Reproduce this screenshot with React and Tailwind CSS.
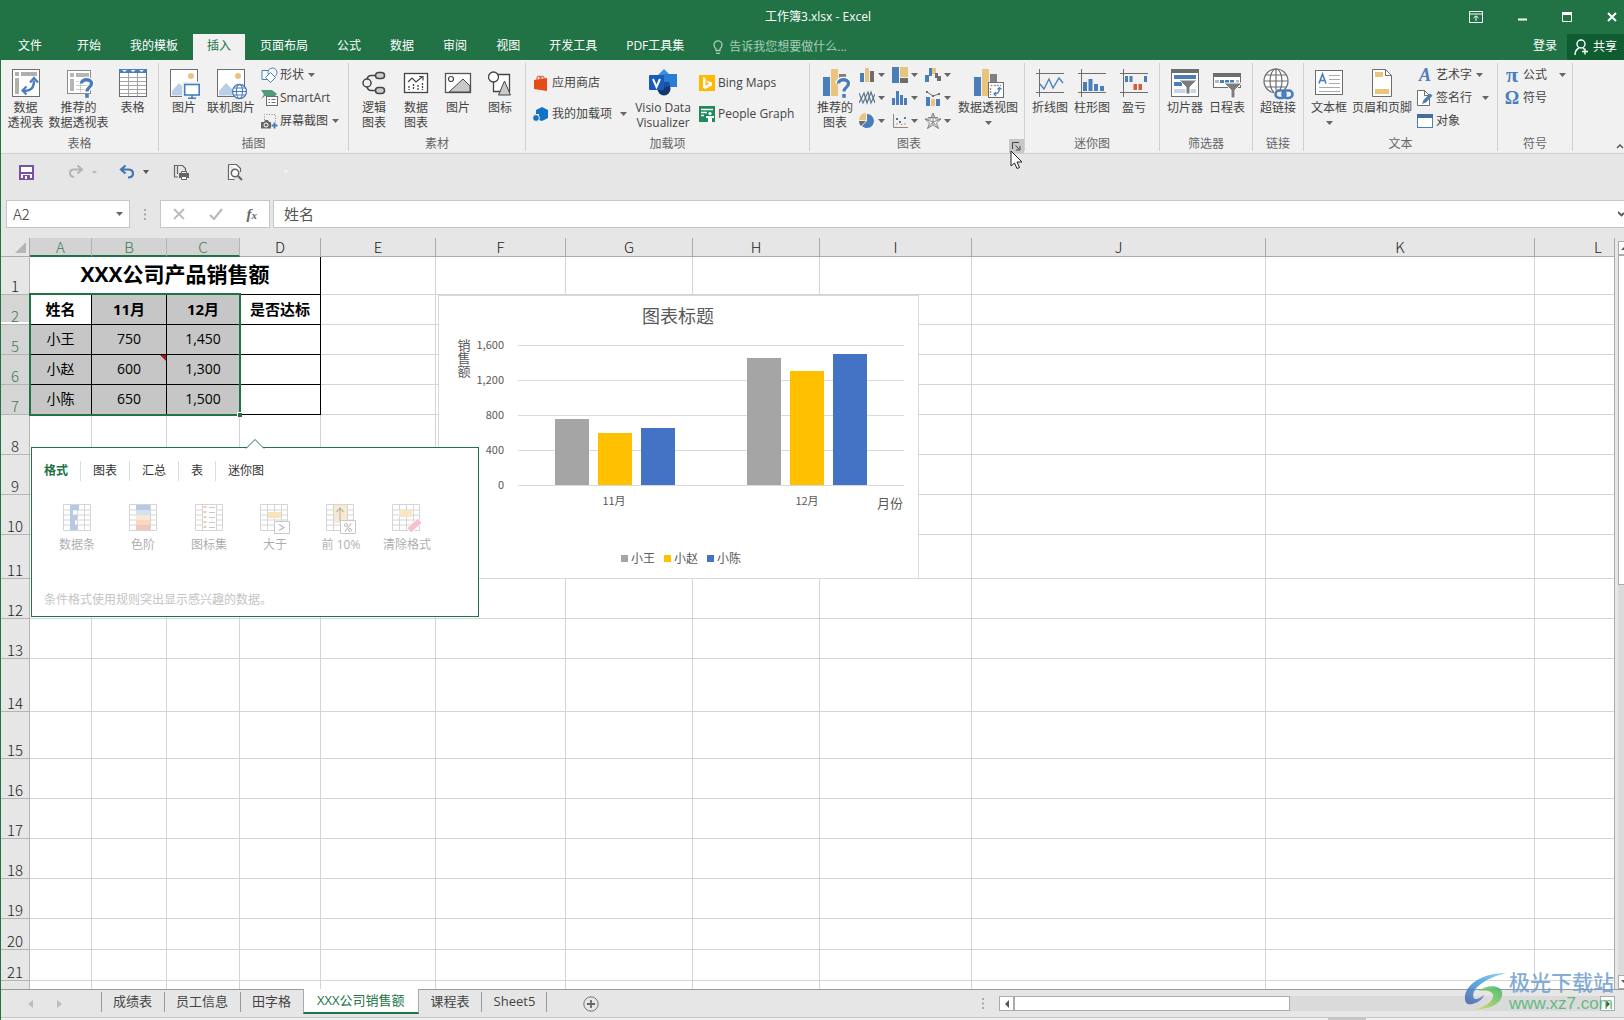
import clsx from 'clsx';

const BLUE = '#4a7ebb';
const GRAY = '#6d6d6d';
const TAN = '#e8c47c';

const TABS = ['文件', '开始', '我的模板', '插入', '页面布局', '公式', '数据', '审阅', '视图', '开发工具', 'PDF工具集'];

const COLS = [
  { id: 'A', w: 'w-[62px]' },
  { id: 'B', w: 'w-[75px]' },
  { id: 'C', w: 'w-[73px]' },
  { id: 'D', w: 'w-[81px]' },
  { id: 'E', w: 'w-[115px]' },
  { id: 'F', w: 'w-[130px]' },
  { id: 'G', w: 'w-[127px]' },
  { id: 'H', w: 'w-[127px]' },
  { id: 'I', w: 'w-[152px]' },
  { id: 'J', w: 'w-[294px]' },
  { id: 'K', w: 'w-[269px]' },
  { id: 'L', w: '' },
];

const ROWS = [
  { id: 1, h: 'h-[38px]', title: 'XXX公司产品销售额' },
  { id: 2, h: 'h-[30px]', cells: ['姓名', '11月', '12月', '是否达标'], head: true },
  { id: 5, h: 'h-[30px]', cells: ['小王', '750', '1,450', ''] },
  { id: 6, h: 'h-[30px]', cells: ['小赵', '600', '1,300', ''], note: 1 },
  { id: 7, h: 'h-[30px]', cells: ['小陈', '650', '1,500', ''] },
  { id: 8, h: 'h-10' },
  { id: 9, h: 'h-10' },
  { id: 10, h: 'h-10' },
  { id: 11, h: 'h-11' },
  { id: 12, h: 'h-10' },
  { id: 13, h: 'h-10' },
  { id: 14, h: 'h-[53px]' },
  { id: 15, h: 'h-[47px]' },
  { id: 16, h: 'h-10' },
  { id: 17, h: 'h-10' },
  { id: 18, h: 'h-10' },
  { id: 19, h: 'h-10' },
  { id: 20, h: 'h-[31px]' },
  { id: 21, h: 'h-[31px]' },
  { id: '', h: 'h-10' },
];

const SHEETS = ['成绩表', '员工信息', '田字格', 'XXX公司销售额', '课程表', 'Sheet5'];

/* ---------- icons ---------- */

function Svg({ w = 32, h = w, className, children }) {
  return (
    <svg width={w} height={h} viewBox={`0 0 ${w} ${h}`} fill="none" className={clsx('shrink-0', className)} aria-hidden="true">
      {children}
    </svg>
  );
}

const Caret = ({ className }) => (
  <Svg w={7} h={4} className={className}><path d="M0 0h7L3.500 4z" fill="#666" /></Svg>
);

const PivotIcon = () => (
  <Svg>
    <rect x="2.500" y="1.500" width="27" height="27" fill="#fff" stroke={GRAY} />
    <path d="M5 4h4v4H5zM11 4h16v4H11zM5 10h4v16H5z" fill="#b0b0b0" />
    <path d="M14 22.500c6 1 10-2 10-10" stroke={BLUE} strokeWidth="2.500" />
    <path d="M20 14.500l4-4.500 4 4.500M16.500 18.500l-4 4 4 4" stroke={BLUE} strokeWidth="2.200" />
  </Svg>
);

const Question = ({ x = 0, y = 0 }) => (
  <g transform={`translate(${x} ${y})`}>
    <path d="M1.500 5.500c0-5 10-5 10 0 0 4-4.500 3.500-4.500 8" stroke="#fff" strokeWidth="6" />
    <path d="M1.500 5.500c0-5 10-5 10 0 0 4-4.500 3.500-4.500 8" stroke={BLUE} strokeWidth="3.400" />
    <rect x="5.200" y="16" width="3.600" height="3.800" fill={BLUE} />
  </g>
);

const RecPivotIcon = () => (
  <Svg>
    <rect x="4.500" y="2.500" width="23" height="23" fill="#fff" stroke="#8a8a8a" />
    <path d="M7 5h4v4H7zM13 5h13v4H13zM7 11h4v12H7z" fill="#b5b5b5" />
    <path d="M13 13.500h12M13 17.500h12M13 21.500h12M17.500 11v13" stroke="#c9c9c9" />
    <Question x={17} y={10} />
  </Svg>
);

const TableIcon = () => (
  <Svg>
    <rect x="2.500" y="1.500" width="27" height="27" fill="#fff" stroke={GRAY} />
    <path d="M2 1h28v4H2z" fill={BLUE} />
    <path d="M5 2h5L7.500 4zM13.500 2h5L16 4zM22 2h5l-2.500 2z" fill="#fff" />
    <path d="M11.500 5v23M20.500 5v23M3 9.500h26M3 13.500h26M3 17.500h26M3 21.500h26M3 25.500h26" stroke="#a3a3a3" />
  </Svg>
);

const Photo = () => (
  <>
    <rect x="2.500" y="1.500" width="27" height="27" fill="#fff" stroke={GRAY} />
    <circle cx="23" cy="8" r="3" fill="#f0bf81" />
    <path d="M4 27.500V23l7-8 9 9v3.500z" fill="#b9cfe8" />
  </>
);

const PictureIcon = () => (
  <Svg>
    <Photo />
    <rect x="16" y="15.500" width="15" height="11.500" fill="#fff" stroke="#f1f1f1" strokeWidth="4" />
    <rect x="16.700" y="16.500" width="14.500" height="10.500" fill="#fff" stroke={BLUE} strokeWidth="1.600" />
    <path d="M24 27v3M20 30.200h8" stroke={BLUE} strokeWidth="1.600" />
  </Svg>
);

const OnlinePictureIcon = () => (
  <Svg>
    <Photo />
    <circle cx="24.500" cy="23.500" r="7" fill="#fff" stroke={BLUE} strokeWidth="1.300" />
    <ellipse cx="24.500" cy="23.500" rx="3" ry="7" stroke={BLUE} strokeWidth="1.200" />
    <path d="M17.500 23.500h14M18.500 20h12M18.500 27h12" stroke={BLUE} strokeWidth="1.200" />
  </Svg>
);

const ShapesIcon = () => (
  <Svg w={17} h={16}>
    <path d="M1 3.500h8v9H1z" fill="#fff" stroke={BLUE} />
    <circle cx="11.500" cy="5.500" r="4.500" fill="#f5f9ff" stroke={BLUE} />
    <path d="M9.500 5.500l5 5-5 5-5-5z" fill="#fff" stroke={BLUE} />
  </Svg>
);

const SmartArtIcon = () => (
  <Svg w={17} h={16}>
    <path d="M0 0h11l5 4-2 2H4L0 9l3-4.500z" fill="#4f9a78" />
    <rect x="5.500" y="6.500" width="11" height="9" fill="#fff" stroke={GRAY} />
    <path d="M7.500 9.500h1.500M7.500 12.500h1.500M10.500 9.500h4M10.500 12.500h4" stroke={GRAY} />
  </Svg>
);

const ScreenshotIcon = () => (
  <Svg w={17} h={16}>
    <path d="M3.500 7V1.500h11V9" stroke="#8a8a8a" strokeDasharray="1 1.500" />
    <path d="M0 9h3l1-2h3l1 2h2v6.500H0z" fill="#666" />
    <circle cx="5" cy="12" r="2" fill="#666" stroke="#fff" />
    <path d="M13.500 9.500v6M10.500 12.500h6" stroke={BLUE} strokeWidth="2" />
  </Svg>
);

const LogicIcon = () => (
  <Svg>
    <circle cx="9" cy="15" r="4" stroke="#444" strokeWidth="1.500" />
    <rect x="17.500" y="4.500" width="9" height="6" rx="3" fill="#ccc" stroke="#444" strokeWidth="1.500" />
    <rect x="17.500" y="19.500" width="9" height="6" rx="3" fill="#ccc" stroke="#444" strokeWidth="1.500" />
    <path d="M17 7.500h-4q-3 0-4 3.500M17 22.500h-4q-3 0-4-3.500" stroke="#444" strokeWidth="1.500" />
  </Svg>
);

const DataChartIcon = () => (
  <Svg>
    <rect x="4.500" y="5.500" width="23" height="19" fill="#fff" stroke="#444" strokeWidth="1.300" />
    <path d="M8 14l4-4 4 4 6-5M19 8.500h4v4" stroke="#444" strokeWidth="1.200" />
    <path d="M9 18v4M13.500 16v6M18 17v5M22.500 15v7" stroke="#444" strokeWidth="1.300" strokeDasharray="2 1" />
  </Svg>
);

const SceneIcon = () => (
  <Svg>
    <rect x="3.500" y="5.500" width="25" height="19" fill="#fff" stroke="#555" strokeWidth="1.300" />
    <circle cx="9" cy="11" r="2.500" stroke="#444" strokeWidth="1.200" />
    <path d="M7 24l14-13 7 7v6z" fill="#c9c9c9" stroke="#444" />
  </Svg>
);

const GlyphIcon = () => (
  <Svg>
    <path d="M9.500 6.500h16v17h-16z" fill="#fff" stroke="#444" strokeWidth="1.300" />
    <circle cx="9.500" cy="9" r="5" fill="#fff" stroke="#444" strokeWidth="1.300" />
    <path d="M20.500 13l6 14h-12z" fill="#c9c9c9" stroke="#444" />
  </Svg>
);

const StoreIcon = () => (
  <Svg w={16}>
    <path d="M1 5l13-2v13L1 14z" fill="#e64a19" />
    <path d="M4 6V2q2-2 4 0v3M7 5V2q2.500-2 4 0v3" stroke="#e64a19" />
  </Svg>
);

const AddinIcon = () => (
  <Svg w={16}>
    <path d="M3 4l6-3 6 3v8l-6 3-3-1V8H3z" fill="#1173c7" />
    <circle cx="3" cy="12" r="3.400" fill="#1173c7" stroke="#f1f1f1" />
  </Svg>
);

const VisioIcon = () => (
  <Svg>
    <path d="M17 1l7 7-7 7-7-7z" fill="#3a8ee0" />
    <path d="M16 6h14v13H16z" fill="#2b7cd3" />
    <circle cx="17" cy="21" r="6.500" fill="#15356f" />
    <path d="M16 14h6l1 4-7 2z" fill="#1d4f9f" />
    <rect x="2" y="7" width="15" height="15" rx="1" fill="#185abd" />
    <path d="M6 11l3.500 8L13 11" stroke="#fff" strokeWidth="2" />
  </Svg>
);

const BingIcon = () => (
  <Svg w={16}>
    <path d="M0 0h16v16H0z" fill="#ffb900" />
    <path d="M4 2l2.500 1v7.500L10 8.800 8 7.500 7.200 5.500 13 7.600v3L6.500 14 4 12.500z" fill="#fff" />
  </Svg>
);

const PeopleIcon = () => (
  <Svg w={16}>
    <path d="M0 0h16v16H0z" fill="#1f8a5b" />
    <path d="M2 3.500h12M2 6.500h6M2 9.500h3" stroke="#fff" strokeWidth="1.500" />
    <circle cx="11" cy="7.500" r="1.600" fill="#fff" />
    <path d="M7 10h8v2h-2v4H9v-4H7z" fill="#fff" />
  </Svg>
);

const RecChartIcon = () => (
  <Svg>
    <path d="M4 9h7v19H4z" fill={BLUE} />
    <path d="M12 1h7v27h-7z" fill={TAN} />
    <path d="M20 6h7v5h-7z" fill="#808080" />
    <Question x={18} y={10} />
  </Svg>
);

const PivotChartIcon = () => (
  <Svg>
    <path d="M2 9h7v19H2z" fill={BLUE} />
    <path d="M10 1h7v27h-7z" fill={TAN} />
    <path d="M18 6h7v10h-7z" fill="#808080" />
    <rect x="16.500" y="14.500" width="15" height="15" fill="#fff" stroke={GRAY} />
    <path d="M18.500 17.500h2M22 17.500h7M18.500 20v7" stroke="#999" strokeWidth="1.500" strokeDasharray="2 1" />
    <path d="M22.500 26q5 0 5-6M25.500 21.500l2-2 2 2M24 24l-2 2 2 2" stroke={BLUE} strokeWidth="1.200" />
  </Svg>
);

const CHART_ICONS = [
  ['柱形图', <Svg w={16}><path d="M1 6h4v9H1z" fill={BLUE} /><path d="M6 1h4v14H6z" fill={TAN} /><path d="M11 4h4v11h-4z" fill={GRAY} /></Svg>],
  ['层次结构图', <Svg w={16}><path d="M0 0h7v16H0z" fill={BLUE} /><path d="M8 0h8v10H8z" fill={TAN} /><path d="M8 11h8v5H8z" fill={GRAY} /></Svg>],
  ['瀑布图', <Svg w={16}><path d="M0 8h4v7H0zM4 1h3v8H4z" fill={BLUE} /><path d="M7 1h4v6H7z" fill={TAN} /><path d="M10 6h3v5h-3zM12 9h4v5h-4z" fill={GRAY} /></Svg>],
  ['折线图', <Svg w={16}><path d="M0 3l4 10L9 2l3 11 4-9" stroke={BLUE} strokeWidth="1.200" /><path d="M0 13L5 3l3 10 4-11 4 11" stroke={GRAY} strokeWidth="1.200" /></Svg>],
  ['统计图', <Svg w={16}><path d="M0 8h3v7H0zM4 1h3v14H4zM8 5h3v10H8zM12 8h3v7h-3z" fill={BLUE} /></Svg>],
  ['组合图', <Svg w={16}><path d="M1 7h4v9H1zM11 9h4v7h-4z" fill={BLUE} /><path d="M6 9h4v7H6z" fill={TAN} /><path d="M2 2l6 4 6-2" stroke={GRAY} /><path d="M1 1h2v2H1zM7 5h2v2H7zM13 3h2v2h-2z" fill={GRAY} /></Svg>],
  ['饼图', <Svg w={16}><path d="M8 1a7 7 0 11-5 12l5-5z" fill={BLUE} /><path d="M7 0v7H0a7 7 0 017-7z" fill={TAN} /><path d="M0 8h7l-5 5a7 7 0 01-2-5z" fill={GRAY} /></Svg>],
  ['散点图', <Svg w={16}><path d="M1.500 1v13.500H16" stroke="#888" /><path d="M4 10h2v2H4zM12 10h2v2h-2z" fill={TAN} /><path d="M7 8h2v2H7zM12 4h2v2h-2z" fill={BLUE} /><path d="M4 5h2v2H4zM9 11h1v1H9z" fill={GRAY} /></Svg>],
  ['雷达图', <Svg w={16}><path d="M8 0l2.500 6H16l-4.500 4 2 5.500L8 12l-5.500 3.500 2-5.500L0 6h5.500zM8 0v12M0 6l8 3 8-3M2.500 15.500L8 9l5.500 6.500M3 4.500h10" stroke="#808080" strokeWidth=".9" /></Svg>],
];

const SparkAxes = () => <path d="M5.500 1v28M2 5.500h28M2 24.500h28" stroke={GRAY} />;

const SparkLineIcon = () => (
  <Svg><SparkAxes /><path d="M6 16l4 5 5-10 4 9 6-10 4 5" stroke={BLUE} strokeWidth="1.300" /></Svg>
);
const SparkColumnIcon = () => (
  <Svg><SparkAxes /><path d="M7 14h4v9H7zM12.500 11h4v12h-4zM18 16h4v7h-4zM24 18h4v5h-4z" fill={BLUE} /></Svg>
);
const SparkWinLossIcon = () => (
  <Svg><SparkAxes /><path d="M7 8h3v6H7zM11.500 8h3v6h-3zM26 8h3v6h-3z" fill={BLUE} /><path d="M15.500 16h3.500v6h-3.500zM20.500 16H24v6h-3.500z" fill="#d05f3d" /></Svg>
);

const SlicerIcon = () => (
  <Svg>
    <rect x="2.500" y="1.500" width="27" height="27" fill="#fff" stroke={GRAY} />
    <path d="M2 1h28v4H2z" fill={GRAY} />
    <path d="M5 7h22v4H5z" fill={BLUE} />
    <path d="M5 14h8v4H5z" fill={BLUE} />
    <path d="M5 21h22v4H5z" fill="#c5d5ea" />
    <path d="M10 12h18l-7 7v7h-4v-7z" fill="#7d7d7d" stroke="#fff" />
  </Svg>
);

const TimelineIcon = () => (
  <Svg>
    <rect x="2.500" y="5.500" width="27" height="14" fill="#fff" stroke={GRAY} />
    <path d="M2 5h28v4H2z" fill={GRAY} />
    <path d="M4 12h4v3H4zM25 12h3v3h-3z" fill="#bbb" />
    <path d="M9 12h4v3H9zM14 12h4v3h-4zM19 12h4v3h-4z" fill={BLUE} />
    <path d="M13 15h18l-7 7v8h-4v-8z" fill="#7d7d7d" stroke="#fff" />
  </Svg>
);

const LinkIcon = () => (
  <Svg>
    <g stroke={GRAY} strokeWidth="1.200">
      <circle cx="14" cy="13" r="12" fill="#fff" />
      <ellipse cx="14" cy="13" rx="6" ry="12" />
      <path d="M14 1v24M2 13h24M4 7h20M4 19h20" />
    </g>
    <path d="M12 22h20v10H12z" fill="#f1f1f1" />
    <rect x="13.500" y="22.500" width="10" height="7.500" rx="3.700" stroke={BLUE} strokeWidth="2.600" />
    <rect x="20.500" y="22.500" width="10" height="7.500" rx="3.700" stroke={BLUE} strokeWidth="2.600" />
  </Svg>
);

const TextBoxIcon = () => (
  <Svg>
    <rect x="2.500" y="2.500" width="27" height="24" fill="#fff" stroke={GRAY} />
    <path d="M6 15.500L9.500 6 13 15.500M7.300 12.500h4.500" stroke={BLUE} strokeWidth="1.600" />
    <path d="M16 7.500h11M16 11.500h11M16 15.500h11M6 19.500h21M6 23.500h21" stroke="#aaa" />
  </Svg>
);

const HeaderIcon = () => (
  <Svg>
    <path d="M6.500 1.500h13l6 6v21h-19z" fill="#fff" stroke={GRAY} />
    <path d="M19.500 1.500v6h6" stroke={GRAY} />
    <path d="M9 4h8v5H9zM9 21h14v5H9z" fill={TAN} />
  </Svg>
);

const SignatureIcon = () => (
  <Svg w={16}><path d="M.5.500h7l5 5v10H.5z" fill="#fff" stroke={GRAY} /><path d="M7.500.500v5h5" stroke={GRAY} /><path d="M5 14l1.500-4L13 3.500l2.500 2L9 12.500z" fill={BLUE} /></Svg>
);
const ObjectIcon = () => (
  <Svg w={16}><rect x=".5" y="1.500" width="15" height="13" fill="#fff" stroke={BLUE} /><path d="M0 1h16v4H0z" fill="#3f6f9f" /></Svg>
);

function Letter({ children, className }) {
  return (
    <span aria-hidden="true" className={clsx("font-['Liberation_Serif',serif] leading-4 font-bold text-[#4a7ebb]", className)}>{children}</span>
  );
}

/* ---------- ribbon parts ---------- */

function BigButton({ icon, lines, w, caret }) {
  return (
    <button className={clsx('flex shrink-0 flex-col items-center pt-[5px] leading-[15px]', w)}>
      {icon}
      {lines.map(l => <span key={l} className="whitespace-nowrap">{l}</span>)}
      {caret && <Caret className="mt-1.5" />}
    </button>
  );
}

function SmallButton({ icon, label, caret, h = 'h-[23px]', gap = 'ml-2' }) {
  return (
    <button className={clsx('flex items-center whitespace-nowrap', h)}>
      <span className="mr-[3px] flex w-4 justify-center">{icon}</span>
      {label}
      {caret && <Caret className={gap} />}
    </button>
  );
}

function Group({ label, w, align = 'justify-center', children, launcher }) {
  return (
    <section className={clsx('relative flex shrink-0 flex-col border-r border-[#d0d0d0]', w)}>
      <div className={clsx('flex h-[73px] items-start', align)}>{children}</div>
      <h2 className={clsx('text-center leading-[15px] text-[#666]', launcher && 'pr-4')}>{label}</h2>
      {launcher && (
        <button aria-label="查看所有图表" className="absolute right-0 -bottom-0.5 flex h-3.5 w-[15px] items-center justify-center bg-[#c6c6c6]">
          <Svg w={9}><path d="M.5 7V.5H7M3.500 3.500l4 4M8 4v4H4" stroke="#444" /></Svg>
        </button>
      )}
    </section>
  );
}

function Ribbon() {
  return (
    <div className="flex overflow-hidden border-b border-[#cfcfcf] bg-[#f1f1f1] pt-[3px] pb-0.5 text-[#444]">
      <Group label="表格" w="w-[158px]">
        <BigButton icon={<PivotIcon />} lines={['数据', '透视表']} w="w-11" />
        <BigButton icon={<RecPivotIcon />} lines={['推荐的', '数据透视表']} w="w-[62px]" />
        <BigButton icon={<TableIcon />} lines={['表格']} w="w-[46px]" />
      </Group>
      <Group label="插图" w="w-[190px]" align="pl-1">
        <BigButton icon={<PictureIcon />} lines={['图片']} w="w-[42px]" />
        <BigButton icon={<OnlinePictureIcon />} lines={['联机图片']} w="w-[52px]" />
        <div className="ml-1 flex flex-col">
          <SmallButton icon={<ShapesIcon />} label="形状" caret gap="ml-1" />
          <SmallButton icon={<SmartArtIcon />} label="SmartArt" />
          <SmallButton icon={<ScreenshotIcon />} label="屏幕截图" caret gap="ml-1" />
        </div>
      </Group>
      <Group label="素材" w="w-[177px]">
        <BigButton icon={<LogicIcon />} lines={['逻辑', '图表']} w="w-[42px]" />
        <BigButton icon={<DataChartIcon />} lines={['数据', '图表']} w="w-[42px]" />
        <BigButton icon={<SceneIcon />} lines={['图片']} w="w-[42px]" />
        <BigButton icon={<GlyphIcon />} lines={['图标']} w="w-[42px]" />
      </Group>
      <Group label="加载项" w="w-[284px]" align="pl-[7px]">
        <div className="flex flex-col pt-1">
          <SmallButton icon={<StoreIcon />} label="应用商店" h="h-[31px]" />
          <SmallButton icon={<AddinIcon />} label="我的加载项" h="h-[31px]" caret />
        </div>
        <BigButton icon={<VisioIcon />} lines={['Visio Data', 'Visualizer']} w="w-[72px]" />
        <div className="flex flex-col pt-1">
          <SmallButton icon={<BingIcon />} label="Bing Maps" h="h-[31px]" />
          <SmallButton icon={<PeopleIcon />} label="People Graph" h="h-[31px]" />
        </div>
      </Group>
      <Group label="图表" w="w-[215px]" align="pl-1" launcher>
        <BigButton icon={<RecChartIcon />} lines={['推荐的', '图表']} w="w-[42px]" />
        <div className="ml-[3px] grid w-[99px] shrink-0 grid-cols-3">
          {CHART_ICONS.map(([name, icon]) => (
            <button key={name} aria-label={name} className="flex h-[23px] items-center gap-[3px]">
              {icon}
              <Caret />
            </button>
          ))}
        </div>
        <BigButton icon={<PivotChartIcon />} lines={['数据透视图']} w="w-[60px]" caret />
      </Group>
      <Group label="迷你图" w="w-[135px]">
        <BigButton icon={<SparkLineIcon />} lines={['折线图']} w="w-[42px]" />
        <BigButton icon={<SparkColumnIcon />} lines={['柱形图']} w="w-[42px]" />
        <BigButton icon={<SparkWinLossIcon />} lines={['盈亏']} w="w-[42px]" />
      </Group>
      <Group label="筛选器" w="w-[93px]">
        <BigButton icon={<SlicerIcon />} lines={['切片器']} w="w-[42px]" />
        <BigButton icon={<TimelineIcon />} lines={['日程表']} w="w-[42px]" />
      </Group>
      <Group label="链接" w="w-[51px]">
        <BigButton icon={<LinkIcon />} lines={['超链接']} w="w-[42px]" />
      </Group>
      <Group label="文本" w="w-[194px]" align="pl-[3px]">
        <BigButton icon={<TextBoxIcon />} lines={['文本框']} w="w-11" caret />
        <BigButton icon={<HeaderIcon />} lines={['页眉和页脚']} w="w-[62px]" />
        <div className="ml-1 flex flex-col">
          <SmallButton icon={<Letter className="text-[18px] italic">A</Letter>} label="艺术字" caret gap="ml-1" />
          <SmallButton icon={<SignatureIcon />} label="签名行" caret gap="ml-2.5" />
          <SmallButton icon={<ObjectIcon />} label="对象" />
        </div>
      </Group>
      <Group label="符号" w="w-[75px]">
        <div className="flex flex-col">
          <SmallButton icon={<Letter className="text-[22px]">π</Letter>} label="公式" caret gap="ml-3" />
          <SmallButton icon={<Letter className="text-[18px]">Ω</Letter>} label="符号" />
        </div>
      </Group>
      <button aria-label="折叠功能区" className="ml-auto flex items-end pb-0.5">
        <Svg w={8} h={6}><path d="M1 5l3-3 3 3" stroke="#555" strokeWidth="1.500" /></Svg>
      </button>
    </div>
  );
}

function TitleBar() {
  return (
    <header className="bg-[#217346] text-white">
      <div className="grid h-[34px] grid-cols-3 items-center">
        <span />
        <h1 className="pl-3 text-center">工作簿3.xlsx - Excel</h1>
        <div className="flex items-center justify-end gap-[33px] pr-1.5">
          <button aria-label="功能区显示选项"><Svg w={14} h={12}><path d="M.5.500h13v11H.5zM.5 3h13M7 10V5M4.500 7L7 4.800 9.500 7" stroke="#fff" /></Svg></button>
          <button aria-label="最小化"><Svg w={12}><path d="M2 8.500h9" stroke="#fff" strokeWidth="2" /></Svg></button>
          <button aria-label="最大化"><Svg w={12}><path d="M1.500 1.500h9v9h-9z" stroke="#fff" /><path d="M1 1h10v3H1z" fill="#fff" /></Svg></button>
          <button aria-label="关闭"><Svg w={12}><path d="M2 2l8 8M10 2l-8 8" stroke="#fff" strokeWidth="2" /></Svg></button>
        </div>
      </div>
      <nav className="flex h-[26px] items-stretch gap-px">
        {TABS.map((t, i) => (
          <button
            key={t}
            className={clsx('px-3.5 pb-0.5 whitespace-nowrap', i === 0 && 'mr-1.5 ml-1', t === '插入' && 'bg-[#f1f1f1] text-[#217346]')}
          >
            {t}
          </button>
        ))}
        <button className="ml-3.5 flex items-center gap-1.5 text-[#a6cdb6]">
          <Svg w={10} h={14}><path d="M3 10.500V9Q1 7 1 4.800a4 4 0 018 0Q9 7 7 9v1.500zM3 13.500h4" stroke="#a6cdb6" strokeWidth="1.300" /></Svg>
          告诉我您想要做什么...
        </button>
        <div className="ml-auto flex items-stretch">
          <button className="px-2.5 pb-0.5">登录</button>
          <button className="flex items-center gap-1 bg-[#0f5c31] pr-[7px] pl-[7px]">
            <Svg w={15} h={17}><circle cx="7" cy="5" r="4" stroke="#fff" strokeWidth="1.400" /><path d="M1 16q0-5 4-7M9 9l1.500 1.500M11 9.500v6M8 12.500h6" stroke="#fff" strokeWidth="1.400" /></Svg>
            共享
          </button>
        </div>
      </nav>
    </header>
  );
}

function QuickAccess() {
  return (
    <div className="flex h-[46px] items-center pb-2.5 pl-[18px]">
      <button aria-label="保存">
        <Svg w={15}><path d="M1 1h13v13H1z" fill="#fff" stroke="#7b4fa6" strokeWidth="2" /><path d="M1 7h13v2H1zM4 10h7v5H4z" fill="#7b4fa6" /><path d="M6 11h2v3H6z" fill="#fff" /></Svg>
      </button>
      <button aria-label="恢复" className="ml-[34px] flex items-center gap-2">
        <Svg w={16}><path d="M9.500 1.500l4.500 4-4.500 4M13 5.500H6q-4 0-4 3.500t4 4" stroke="#b3b3b3" strokeWidth="2" /></Svg>
        <Svg w={5} h={3}><path d="M0 0h5L2.500 3z" fill="#b8b8b8" /></Svg>
      </button>
      <button aria-label="撤消" className="ml-[22px] flex items-center gap-2">
        <Svg w={16}><path d="M6.500 1.500L2 5.500l4.500 4M3 5.500h6q5 0 5 4t-5 4" stroke="#3f76b5" strokeWidth="2.200" /></Svg>
        <Svg w={6} h={4}><path d="M0 0h6L3 4z" fill="#555" /></Svg>
      </button>
      <button aria-label="快速打印" className="ml-6">
        <Svg w={17}><path d="M5 13H1.500V1.500H4M4.500 1.500h5l3 3v3M4.500 1.500V10" stroke="#666" strokeWidth="1.200" /><path d="M6 9h10v5H6z" fill="#666" /><path d="M8.500 7.500h5v2h-5zM8.500 12.500h5v3h-5z" fill="#fff" stroke="#666" /></Svg>
      </button>
      <button aria-label="打印预览" className="ml-[37px]">
        <Svg w={16} h={17}><path d="M1.500.500h8l4 4V8M1.500.500v15h6" stroke="#666" strokeWidth="1.200" fill="#fff" /><circle cx="8" cy="9" r="3.700" fill="#fff" stroke="#666" strokeWidth="1.500" /><path d="M11 12l4 4" stroke="#666" strokeWidth="2.200" /></Svg>
      </button>
      <Svg w={6} h={4} className="ml-10"><path d="M0 0h6L3 4z" fill="#f0f0f0" /></Svg>
    </div>
  );
}

function FormulaBar() {
  return (
    <div className="flex h-7 shrink-0 items-stretch pl-[5px]">
      <div className="flex w-[124px] items-center border border-[#c6c6c6] bg-white pr-1.5">
        <input aria-label="名称框" defaultValue="A2" className="w-full min-w-0 pl-1.5 font-['Noto_Sans_CJK_SC',sans-serif] text-[15px] leading-6 font-light text-[#333] outline-none" />
        <button aria-label="名称列表"><Caret /></button>
      </div>
      <div className="flex w-[30px] items-center justify-center">
        <Svg w={2} h={11}><path d="M0 0h2v2H0zM0 4.500h2v2H0zM0 9h2v2H0z" fill="#aaa" /></Svg>
      </div>
      <div className="flex w-[110px] items-center justify-around border border-[#c6c6c6] bg-white">
        <button aria-label="取消"><Svg w={12}><path d="M1 1l10 10M11 1L1 11" stroke="#bbb" strokeWidth="1.800" /></Svg></button>
        <button aria-label="输入"><Svg w={14} h={12}><path d="M1 7l4 4 8-10" stroke="#bbb" strokeWidth="2.200" /></Svg></button>
        <button aria-label="插入函数" className="font-['Liberation_Serif',serif] text-[15px] leading-4 font-bold text-[#666] italic">
          f<span className="text-[11px]">x</span>
        </button>
      </div>
      <div className="ml-[3px] flex flex-1 items-center border-y border-l border-[#c6c6c6] bg-white">
        <input aria-label="编辑栏" defaultValue="姓名" className="w-full min-w-0 pl-2.5 text-[15px] leading-6 text-[#555] outline-none" />
        <button aria-label="展开编辑栏"><Svg w={6} h={6}><path d="M0 1l3.500 3.500L6 2" stroke="#555" strokeWidth="1.800" /></Svg></button>
      </div>
    </div>
  );
}

/* ---------- sheet ---------- */

function Row({ row }) {
  const selected = row.cells != null;
  const rest = COLS.slice(row.cells || row.title ? 4 : 0);
  return (
    <tr className={row.h}>
      <th
        scope="row"
        className={clsx(
          'border-r border-b border-[#b5b5b5] align-bottom text-[15px] leading-4 font-light',
          selected ? 'bg-[#d5d5d5] text-[#3d7a58]' : 'bg-[#e6e6e6] text-[#222]',
          row.id === 2 && 'shadow-[inset_0_-2px_0_#fff]',
        )}
      >
        {row.id}
      </th>
      {row.title && (
        <td colSpan={4} className="border-r border-b border-black pb-1 text-center font-['Open_Sans','Noto_Sans_CJK_SC',sans-serif] text-[21px] leading-6 font-bold">
          {row.title}
        </td>
      )}
      {row.cells?.map((c, i) => (
        <td
          key={i}
          className={clsx(
            'relative border-r border-b border-black pb-0.5 text-center font-["Open_Sans","Noto_Sans_CJK_SC",sans-serif]',
            row.head ? 'text-[15px] leading-5 font-bold' : 'text-[14px] leading-5',
            i < 3 && !(row.head && i === 0) && 'bg-[#c6c6c6]',
          )}
        >
          {c}
          {row.note === i && (
            <Svg w={6} className="absolute top-0 right-0"><path d="M0 0h6v6z" fill="#b0121b" /></Svg>
          )}
        </td>
      ))}
      {rest.map(c => <td key={c.id} className="border-r border-b border-[#d4d4d4]" />)}
    </tr>
  );
}

const SERIES = [
  { name: '小王', color: '#a5a5a5', values: [750, 1450] },
  { name: '小赵', color: '#ffc000', values: [600, 1300] },
  { name: '小陈', color: '#4472c4', values: [650, 1500] },
];

function Chart() {
  // value 0 sits at y=190, every 400 is 35px
  const y = v => 190 - (v / 1600) * 140;
  return (
    <svg
      width="481" height="284" viewBox="0 0 481 284"
      className="absolute top-[67px] left-[437px] bg-white font-['Noto_Sans_CJK_SC',sans-serif]"
      fill="#595959" fontSize="12" role="img" aria-label="图表标题"
    >
      <rect x=".5" y=".5" width="480" height="283" fill="none" stroke="#d9d9d9" />
      <text x="240" y="28" fontSize="18" textAnchor="middle">图表标题</text>
      <text x="26" y="44" fontSize="13" className="[writing-mode:vertical-rl]">销售额</text>
      {[0, 400, 800, 1200, 1600].map(v => (
        <g key={v}>
          <path d={`M80 ${y(v) + 0.5}h386`} stroke="#d9d9d9" />
          <text x="66" y={y(v) + 4} fontSize="11" textAnchor="end">{v.toLocaleString('en-US')}</text>
        </g>
      ))}
      {SERIES.map((s, i) => s.values.map((v, j) => (
        <rect key={`${i}-${j}`} x={117 + i * 43 + j * 192} y={Math.round(y(v))} width="34" height={190 - Math.round(y(v))} fill={s.color} />
      )))}
      <text x="176" y="210" textAnchor="middle" fontSize="11">11月</text>
      <text x="369" y="210" textAnchor="middle" fontSize="11">12月</text>
      <text x="439" y="213" fontSize="13">月份</text>
      {SERIES.map((s, i) => (
        <g key={s.name}>
          <rect x={183 + i * 43} y="260" width="7" height="7" fill={s.color} />
          <text x={193 + i * 43} y="268">{s.name}</text>
        </g>
      ))}
    </svg>
  );
}

const MiniGrid = () => <path d="M.5.500h27v26H.5zM7.500.500v26M14.500.500v26M21.500.500v26M.5 6h27M.5 11h27M.5 16h27M.5 21h27" fill="#fff" stroke="#999" />;

const ANALYSIS = [
  ['数据条', <Svg w={28} h={30}><MiniGrid /><path d="M7 1h9v5H7zM7 6h3v5H7zM7 11h7v5H7zM7 16h5v5H7zM7 21h8v5H7z" fill={BLUE} /></Svg>],
  ['色阶', <Svg w={28} h={30}><MiniGrid /><path d="M7 1h14v5H7z" fill="#4a7ebb" /><path d="M7 6h14v5H7z" fill="#93b5dc" /><path d="M7 11h14v5H7z" fill="#f3c58b" /><path d="M7 16h14v5H7z" fill="#eda36c" /><path d="M7 21h14v5H7z" fill="#e0705c" /></Svg>],
  ['图标集', <Svg w={28} h={30}><MiniGrid /><path d="M8 1h13v25H8z" fill="#fff" /><path d="M10 2v23" stroke="#d08050" strokeWidth="3" strokeDasharray="2 3" /><path d="M14 3.500h6M14 8.500h6M14 13.500h6M14 18.500h6M14 23.500h6" stroke="#777" /></Svg>],
  ['大于', <Svg w={30} h={30}><MiniGrid /><path d="M8 8h13v6H8z" fill="#efc05a" /><path d="M14.500 17.500h15v12h-15z" fill="#fff" stroke="#777" /><path d="M19 20.500l5 3-5 3" stroke="#555" strokeWidth="1.300" /></Svg>],
  ['前 10%', <Svg w={30} h={30}><MiniGrid /><path d="M8 1h13v18H8z" fill="#efc98f" /><path d="M14 17V4M10.500 8L14 4l3.500 4" stroke="#555" strokeWidth="1.300" /><path d="M14.500 16.500h15v13h-15z" fill="#fff" stroke="#777" /><path d="M25 19.500l-6 8" stroke="#555" strokeWidth="1.200" /><circle cx="20" cy="21" r="1.500" stroke="#555" /><circle cx="24" cy="26" r="1.500" stroke="#555" /></Svg>],
  ['清除格式', <Svg w={30} h={30}><MiniGrid /><path d="M7 6h13v7H7z" fill="#f3c070" /><path d="M15 24L26 14l4 5-11 10z" fill="#e76a86" stroke="#fff" /></Svg>],
];

function QuickAnalysis() {
  return (
    <div className="absolute top-[219px] left-[30px] w-[448px] border border-[#217346] bg-white px-3 pt-[13px] pb-2 text-[#333]">
      <Svg w={20} h={11} className="absolute -top-2.5 left-[213px]"><path d="M1 10.500l9-9 9 9" fill="#fff" stroke="#217346" /><path d="M2 10.500h16" stroke="#fff" /></Svg>
      <div className="flex h-5 items-center">
        {['格式', '图表', '汇总', '表', '迷你图'].map((t, i) => (
          <button
            key={t}
            className={clsx('h-5 border-[#ddd] pr-3', i === 0 ? 'font-bold text-[#217346]' : 'pl-3', i < 4 && 'border-r')}
          >
            {t}
          </button>
        ))}
      </div>
      <div className="mt-[23px] flex opacity-40">
        {ANALYSIS.map(([label, icon]) => (
          <button key={label} className="flex w-[66px] flex-col items-center gap-[3px] leading-4 whitespace-nowrap">
            {icon}
            {label}
          </button>
        ))}
      </div>
      <p className="mt-[39px] leading-4 text-[#c4c4c4]">条件格式使用规则突出显示感兴趣的数据。</p>
    </div>
  );
}

function Sheet() {
  return (
    <div className="flex min-h-0 flex-1">
      <div className="relative min-w-0 flex-1 overflow-hidden pt-2.5">
        <table className="w-[calc(100%+48px)] table-fixed border-separate border-spacing-0 bg-white font-['Noto_Sans_CJK_SC',sans-serif] text-black">
          <colgroup>
            <col className="w-[29px]" />
            {COLS.map(c => <col key={c.id} className={c.w} />)}
          </colgroup>
          <thead>
            <tr className="h-[19px]">
              <th className="border-r border-b border-[#ababab] bg-[#e6e6e6]">
                <Svg w={11} className="ml-3.5"><path d="M11 0v11H0z" fill="#b5b5b5" /></Svg>
              </th>
              {COLS.map((c, i) => (
                <th
                  key={c.id}
                  scope="col"
                  className={clsx(
                    'border-r text-[15px] leading-4 font-light',
                    i < 3
                      ? 'border-b-2 border-r-[#b5b5b5] border-b-[#217346] bg-[#d3d3d3] text-[#3d7a58]'
                      : 'border-b border-[#ababab] bg-[#e6e6e6] text-[#222]',
                  )}
                >
                  {c.id}
                </th>
              ))}
            </tr>
          </thead>
          <tbody>
            {ROWS.map(r => <Row key={r.id} row={r} />)}
          </tbody>
        </table>
        {/* selection A2:C7 */}
        <div className="pointer-events-none absolute top-[65px] left-7 h-[123px] w-[212px] border-2 border-[#217346]">
          <span className="absolute -right-[3px] -bottom-[3px] size-[5px] border-t border-l border-white bg-[#217346]" />
        </div>
        <Chart />
        <QuickAnalysis />
      </div>
      <div className="mt-2.5 flex w-[10px] flex-col border-l border-[#ababab] bg-[#e6e6e6] pt-[3px] pl-[3px]">
        <button aria-label="向上滚动" className="flex h-3.5 items-center border-y border-l border-[#ababab] bg-white pl-0.5">
          <Svg w={3} h={4}><path d="M0 4l3-3v3z" fill="#555" /></Svg>
        </button>
        <div className="flex-1 bg-[#dadada]">
          <div className="h-[330px] border-y border-l border-[#ababab] bg-white" />
        </div>
        <button aria-label="向下滚动" className="flex h-3.5 items-center border-y border-l border-[#ababab] bg-white pl-0.5">
          <Svg w={3} h={4}><path d="M0 0l3 3V0z" fill="#555" /></Svg>
        </button>
      </div>
    </div>
  );
}

function SheetBar() {
  return (
    <footer>
      <div className="flex h-7 items-stretch border-t border-[#9a9a9a] text-[13px] text-[#444]">
        <div className="flex w-[100px] items-center gap-6 pl-[27px]">
          <button aria-label="上一个工作表"><Svg w={5} h={8}><path d="M5 0v8L0 4z" fill="#bdbdbd" /></Svg></button>
          <button aria-label="下一个工作表"><Svg w={5} h={8}><path d="M0 0v8l5-4z" fill="#bdbdbd" /></Svg></button>
        </div>
        {SHEETS.map((s, i) => (
          <button
            key={s}
            className={clsx(
              '-mt-px mb-[3px] flex items-center whitespace-nowrap',
              i === 3 ? 'border-x border-b-2 border-x-[#ababab] border-b-[#217346] bg-white px-[13px] pt-px text-[#217346]' : 'px-3 text-[#444]',
            )}
          >
            <span className={clsx(i !== 3 && 'relative')}>
              {i < 3 && <i className="absolute top-0 -left-3 h-5 w-px bg-[#9a9a9a]" />}
              {i > 3 && <i className="absolute top-0 -right-3 h-5 w-px bg-[#9a9a9a]" />}
              {s}
            </span>
          </button>
        ))}
        <button aria-label="新工作表" className="ml-9">
          <Svg w={16}><circle cx="8" cy="8" r="7.200" stroke="#777" /><path d="M8 4v8M4 8h8" stroke="#666" strokeWidth="1.800" /></Svg>
        </button>
        <div className="ml-auto flex items-center pr-[9px]">
          <Svg w={2} h={11} className="mr-[15px]"><path d="M0 0h2v2H0zM0 4.500h2v2H0zM0 9h2v2H0z" fill="#aaa" /></Svg>
          <button aria-label="向左滚动" className="flex h-[15px] w-[15px] items-center justify-center border border-[#ababab] bg-white">
            <Svg w={4} h={8}><path d="M4 0v8L0 4z" fill="#555" /></Svg>
          </button>
          <div className="h-[15px] w-[586px] bg-[#dadada]">
            <div className="h-[15px] w-[276px] border border-[#ababab] bg-white" />
          </div>
          <button aria-label="向右滚动" className="flex h-[15px] w-[15px] items-center justify-center border border-[#ababab] bg-white">
            <Svg w={4} h={8}><path d="M0 0v8l4-4z" fill="#555" /></Svg>
          </button>
        </div>
      </div>
      <div className="flex h-[3px] justify-end border-t border-[#c6c6c6] bg-[#f1f1f1] pr-[258px]">
        <span className="w-[38px] bg-[#c6c6c6]" />
      </div>
    </footer>
  );
}

function SiteBadge() {
  return (
    <div className="pointer-events-none absolute right-2.5 bottom-1.5 flex items-center gap-0.5 opacity-85">
      <svg width="44" height="40" viewBox="0 0 48 44" fill="none" aria-hidden="true">
        <defs>
          <linearGradient id="swirlBlue" x1="1" y1="0" x2="0" y2="1"><stop stopColor="#8fd0f2" /><stop offset=".5" stopColor="#3f9bdc" /><stop offset="1" stopColor="#4b5fa8" /></linearGradient>
          <linearGradient id="swirlGreen" x1="1" y1="0" x2="0" y2="1"><stop stopColor="#35b56a" /><stop offset="1" stopColor="#d8de55" /></linearGradient>
        </defs>
        <path d="M47 1C26 1 5 10 2 26c-1 8 3 11 9 9 7-2 11-6 12-10-5 5-12 7-12 1C11 16 27 6 47 1z" fill="url(#swirlBlue)" />
        <path d="M17 21c8-7 26-8 26 3 0 10-14 18-31 17 12-2 21-9 21-15 0-5-9-7-16-5z" fill="url(#swirlGreen)" />
      </svg>
      <div className="whitespace-nowrap">
        <div className="text-[21px] leading-6 font-medium text-[#6f9fd0]">极光下载站</div>
        <div className="font-['Liberation_Sans',sans-serif] text-[17px] leading-5 text-[#4fb571]">www.xz7.com</div>
      </div>
    </div>
  );
}

export default function App() {
  return (
    <div className="relative flex h-screen flex-col overflow-hidden bg-[#217346] font-['Open_Sans','Noto_Sans_CJK_SC',sans-serif] text-[12px]">
      <TitleBar />
      <div className="flex min-h-0 flex-1 flex-col border-l border-[#217346] bg-[#e6e6e6]">
        <div className="relative">
          <Ribbon />
          <Svg w={13} h={20} className="absolute top-[90px] left-[1009px] z-10">
            <path d="M1 1v15l3.500-3 2.500 5.500 2.500-1L7 12h5z" fill="#fff" stroke="#222" />
          </Svg>
        </div>
        <QuickAccess />
        <FormulaBar />
        <Sheet />
        <SheetBar />
      </div>
      <SiteBadge />
    </div>
  );
}
